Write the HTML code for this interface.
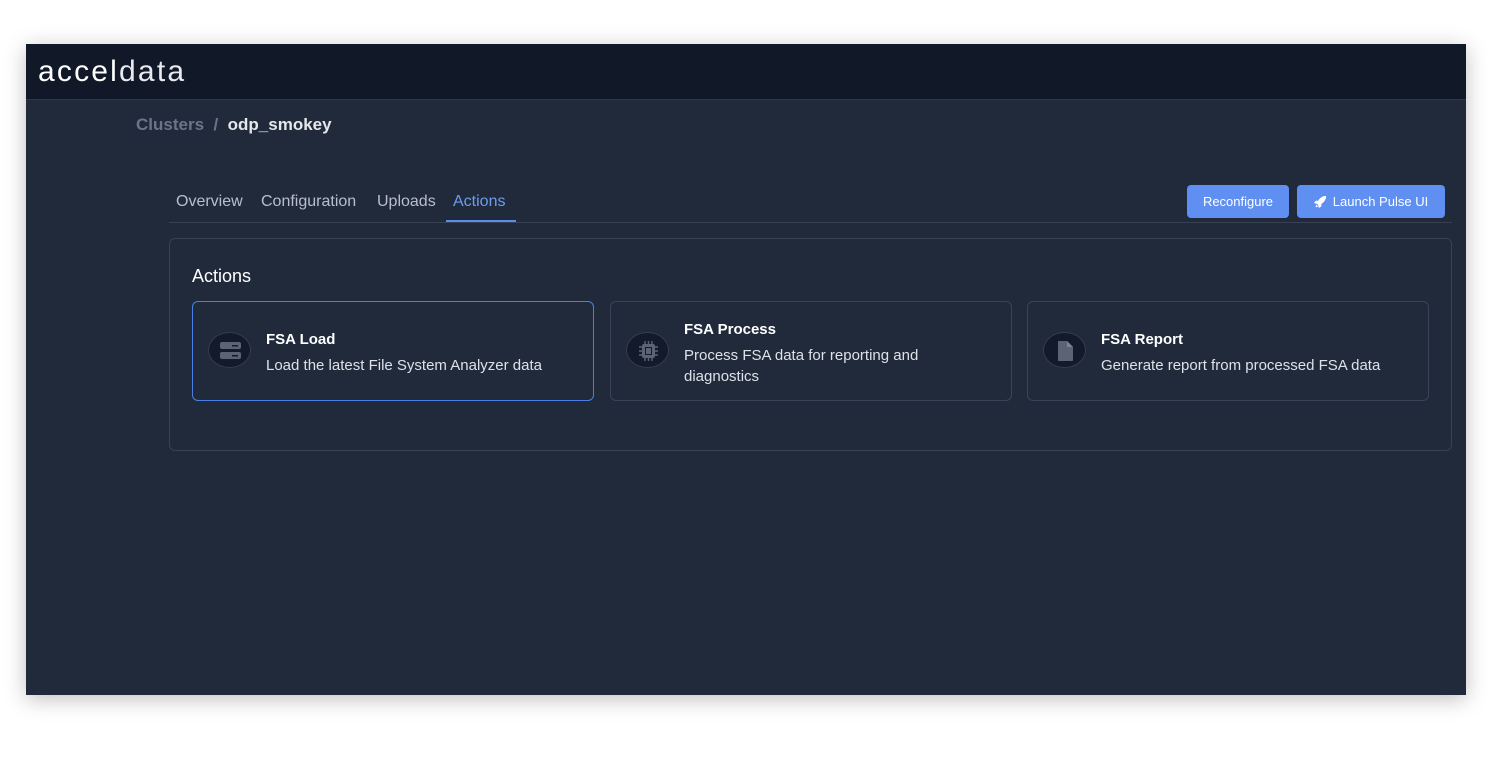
<!DOCTYPE html>
<html><head><style>
*{box-sizing:border-box;margin:0;padding:0}
body{width:1494px;height:774px;background:#fff;font-family:"Liberation Sans",Arial,sans-serif;position:relative;overflow:hidden}
.win{position:absolute;left:26px;top:44px;width:1440px;height:651px;background:#212a3b;box-shadow:0 4px 20px rgba(0,0,0,.25)}
.hdr{height:56px;background:#111827;border-bottom:1px solid #2f3849;position:relative}
.logo{position:absolute;left:12px;top:11px;color:#fff;font-size:30px;letter-spacing:2.2px}
.logo span{font-weight:300;color:#e8eaf0}
.bc{position:absolute;left:110px;top:71px;font-size:17px;font-weight:bold;color:#6b7588}
.bc em{font-style:normal;color:#e5e7eb}
.tabs{position:absolute;left:143px;top:141px;width:1283px;height:38px;border-bottom:1px solid #374151}
.tab{position:absolute;top:8px;font-size:16px;color:#b8bfcc}
.tab.a{color:#6b9cf0}
.ul{position:absolute;left:277px;top:35px;width:70px;height:2px;background:#5b8def}
.btn{position:absolute;top:141px;height:33px;background:#5f8ff0;color:#fff;border-radius:4px;font-size:13px;line-height:33px;text-align:center}
.panel{position:absolute;left:143px;top:194px;width:1283px;height:213px;border:1px solid #384253;border-radius:6px}
.panel h2{position:absolute;left:22px;top:27px;font-size:18px;font-weight:normal;color:#fff}
.card{position:absolute;top:62px;width:402px;height:100px;border:1px solid #3a4456;border-radius:6px}
.card.s{border-color:#4c7fe6}
.ic{position:absolute;left:15px;top:30px;width:43px;height:36px;border-radius:50%;background:#131a29;border:1px solid #333d4e}
.ic svg{position:absolute;left:11px;top:8px}
.t{position:absolute;left:73px;font-size:15px;font-weight:bold;color:#fff}
.d{position:absolute;left:73px;font-size:15px;color:#dde1e8;line-height:21px}
</style></head><body>
<div class="win">
<div class="hdr"><div class="logo">accel<span>data</span></div></div>
<div class="bc">Clusters &nbsp;/&nbsp; <em>odp_smokey</em></div>
<div class="tabs">
<div class="tab" style="left:7px">Overview</div>
<div class="tab" style="left:92px">Configuration</div>
<div class="tab" style="left:208px">Uploads</div>
<div class="tab a" style="left:284px">Actions</div>
<div class="ul"></div>
</div>
<div class="btn" style="left:1161px;width:102px">Reconfigure</div>
<div class="btn" style="left:1271px;width:148px"><svg width="13" height="13" viewBox="0 0 16 16" style="vertical-align:-2px;margin-right:6px"><path fill="#fff" d="M15 1C10 1 7 4 5 7L2 7 0 10l4 1 1 1 1 4 3-2v-3c3-2 6-5 6-10zM3 12c-1 1-1 3-1 3s2 0 3-1z"/></svg>Launch Pulse UI</div>
<div class="panel">
<h2>Actions</h2>
<div class="card s" style="left:22px">
<div class="ic"><svg width="21" height="20" viewBox="0 0 21 20"><rect x="0" y="1" width="21" height="7" rx="2" fill="#5a6475"/><rect x="0" y="11" width="21" height="7" rx="2" fill="#5a6475"/><rect x="12" y="4" width="6" height="1.5" fill="#131a29"/><rect x="12" y="14" width="6" height="1.5" fill="#131a29"/></svg></div>
<div class="t" style="top:29px">FSA Load</div>
<div class="d" style="top:53px">Load the latest File System Analyzer data</div>
</div>
<div class="card" style="left:440px">
<div class="ic"><svg width="21" height="20" viewBox="0 0 21 20"><rect x="4" y="3" width="13" height="14" rx="2" fill="#5a6475"/><rect x="7" y="6" width="7" height="8" fill="#131a29"/><rect x="8" y="7" width="5" height="6" fill="#5a6475"/><g stroke="#5a6475" stroke-width="1.4"><path d="M1 6h3M1 10h3M1 14h3M17 6h3M17 10h3M17 14h3M7 0v3M10.5 0v3M14 0v3M7 17v3M10.5 17v3M14 17v3"/></g></svg></div>
<div class="t" style="top:19px">FSA Process</div>
<div class="d" style="top:43px">Process FSA data for reporting and<br>diagnostics</div>
</div>
<div class="card" style="left:857px">
<div class="ic"><svg width="21" height="20" viewBox="0 0 21 20"><path d="M3 0h9l6 6v13c0 1-1 1-1 1H4c-1 0-1-1-1-1z" fill="#5a6475"/><path d="M12 0v6h6" fill="#7a8495"/></svg></div>
<div class="t" style="top:29px">FSA Report</div>
<div class="d" style="top:53px">Generate report from processed FSA data</div>
</div>
</div>
</div>
</body></html>
